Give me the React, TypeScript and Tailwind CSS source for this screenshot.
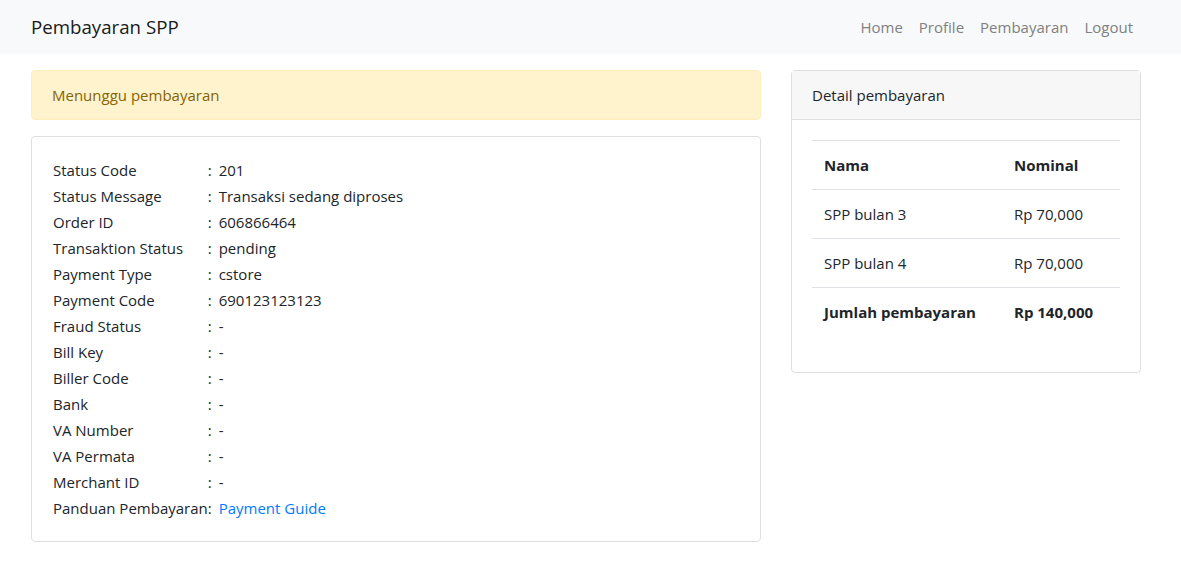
import React from "react";

const details: [string, string][] = [
  ["Status Code", "201"],
  ["Status Message", "Transaksi sedang diproses"],
  ["Order ID", "606866464"],
  ["Transaktion Status", "pending"],
  ["Payment Type", "cstore"],
  ["Payment Code", "690123123123"],
  ["Fraud Status", "-"],
  ["Bill Key", "-"],
  ["Biller Code", "-"],
  ["Bank", "-"],
  ["VA Number", "-"],
  ["VA Permata", "-"],
  ["Merchant ID", "-"],
];

const items = [
  { nama: "SPP bulan 3", nominal: "Rp 70,000" },
  { nama: "SPP bulan 4", nominal: "Rp 70,000" },
];

const App: React.FC = () => {
  return (
    <div className="min-h-screen bg-white text-[15px] leading-6 text-[#212529] font-['Open_Sans','Noto_Sans',sans-serif]">
      {/* Navbar */}
      <nav className="h-[54px] bg-[#f8f9fa]">
        <div className="flex h-full items-center justify-between pl-[31px] pr-[40px]">
          <a className="text-[18.7px] text-[#1a1a1a]">Pembayaran SPP</a>
          <ul className="flex">
            {["Home", "Profile", "Pembayaran", "Logout"].map((l) => (
              <li key={l}>
                <a className="block px-2 py-2 text-[#808080]">{l}</a>
              </li>
            ))}
          </ul>
        </div>
      </nav>

      <div className="flex gap-[30px] pl-[31px] pt-4">
        {/* Left column */}
        <div className="w-[730px]">
          <div className="mb-4 h-[50px] rounded border border-[#ffeeba] bg-[#fff3cd] px-5 py-3 text-[#856404]">
            Menunggu pembayaran
          </div>

          <div className="rounded border border-[#dfdfdf] p-5">
            <table className="border-collapse">
              <tbody>
                {details.map(([k, v]) => (
                  <tr key={k} className="h-[26px]">
                    <td className="w-[155px] whitespace-nowrap pl-[1px]">{k}</td>
                    <td className="whitespace-nowrap">
                      <span className="mr-[7px]">:</span>
                      {v}
                    </td>
                  </tr>
                ))}
                <tr className="h-[26px]">
                  <td className="whitespace-nowrap pl-[1px]">Panduan Pembayaran</td>
                  <td className="whitespace-nowrap">
                    <span className="mr-[7px]">:</span>
                    <a className="text-[#007bff]">Payment Guide</a>
                  </td>
                </tr>
              </tbody>
            </table>
          </div>
        </div>

        {/* Right column */}
        <div className="w-[350px] self-start rounded border border-[#dfdfdf]">
          <div className="h-[49px] border-b border-[#dfdfdf] bg-[#f7f7f7] px-5 py-3">
            Detail pembayaran
          </div>
          <div className="p-5">
            <table className="mb-4 w-[308px] border-collapse">
              <thead>
                <tr className="h-[49px] border-t border-b border-[#dee2e6]">
                  <th className="w-[190px] px-3 text-left font-bold">Nama</th>
                  <th className="px-3 text-left font-bold">Nominal</th>
                </tr>
              </thead>
              <tbody>
                {items.map((it) => (
                  <tr key={it.nama} className="h-[49px] border-b border-[#dee2e6]">
                    <td className="px-3">{it.nama}</td>
                    <td className="px-3">{it.nominal}</td>
                  </tr>
                ))}
                <tr className="h-[48px]">
                  <td className="px-3 font-bold">Jumlah pembayaran</td>
                  <td className="px-3 font-bold">Rp 140,000</td>
                </tr>
              </tbody>
            </table>
          </div>
        </div>
      </div>
    </div>
  );
};

export default App;
